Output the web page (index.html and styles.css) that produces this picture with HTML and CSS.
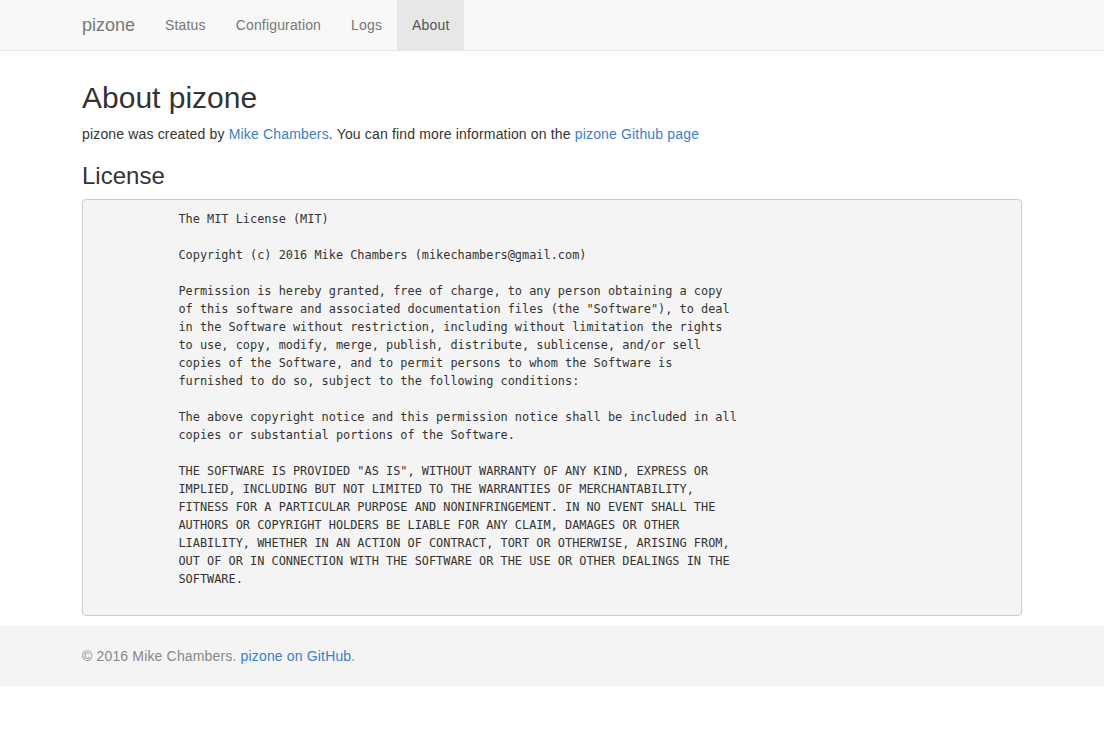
FILE: index.html
```html
<!DOCTYPE html>
<html lang="en">
<head>
<meta charset="utf-8">
<title>pizone - About</title>
<link rel="stylesheet" href="styles.css">
</head>
<body>
<nav class="navbar">
  <div class="container nav-inner">
    <a class="brand" href="#">pizone</a>
    <ul class="nav">
      <li><a href="#">Status</a></li>
      <li><a href="#">Configuration</a></li>
      <li><a href="#">Logs</a></li>
      <li class="active"><a href="#">About</a></li>
    </ul>
  </div>
</nav>
<main class="container">
  <h2 class="title">About pizone</h2>
  <p class="intro">pizone was created by <a href="#">Mike Chambers</a>. You can find more information on the <a href="#">pizone Github page</a></p>
  <h3 class="subtitle">License</h3>
<pre class="license">
            The MIT License (MIT)

            Copyright (c) 2016 Mike Chambers (mikechambers@gmail.com)

            Permission is hereby granted, free of charge, to any person obtaining a copy
            of this software and associated documentation files (the "Software"), to deal
            in the Software without restriction, including without limitation the rights
            to use, copy, modify, merge, publish, distribute, sublicense, and/or sell
            copies of the Software, and to permit persons to whom the Software is
            furnished to do so, subject to the following conditions:

            The above copyright notice and this permission notice shall be included in all
            copies or substantial portions of the Software.

            THE SOFTWARE IS PROVIDED "AS IS", WITHOUT WARRANTY OF ANY KIND, EXPRESS OR
            IMPLIED, INCLUDING BUT NOT LIMITED TO THE WARRANTIES OF MERCHANTABILITY,
            FITNESS FOR A PARTICULAR PURPOSE AND NONINFRINGEMENT. IN NO EVENT SHALL THE
            AUTHORS OR COPYRIGHT HOLDERS BE LIABLE FOR ANY CLAIM, DAMAGES OR OTHER
            LIABILITY, WHETHER IN AN ACTION OF CONTRACT, TORT OR OTHERWISE, ARISING FROM,
            OUT OF OR IN CONNECTION WITH THE SOFTWARE OR THE USE OR OTHER DEALINGS IN THE
            SOFTWARE.
        
</pre>
</main>
<footer class="footer">
  <div class="container">
    <p class="footer-text">&copy; 2016 Mike Chambers. <a href="#">pizone on GitHub</a>.</p>
  </div>
</footer>
</body>
</html>
```

FILE: styles.css
```css
* { box-sizing: border-box; }

html, body {
  margin: 0;
  padding: 0;
}

body {
  font-family: "Liberation Sans", Arial, Helvetica, sans-serif;
  font-size: 14px;
  line-height: 20px;
  letter-spacing: 0.16px;
  color: #333;
  background: #fff;
}

a {
  color: #3a7fc4;
  text-decoration: none;
}

.container {
  width: 970px;
  margin: 0 auto;
  padding: 0 15px;
}

.navbar {
  height: 51px;
  background: #f8f8f8;
  border-bottom: 1px solid #e7e7e7;
}

.nav-inner {
  display: flex;
  align-items: stretch;
  height: 50px;
}

.brand {
  display: block;
  height: 50px;
  padding: 15px 15px;
  margin-left: -15px;
  font-size: 18px;
  line-height: 20px;
  letter-spacing: 0;
  color: #777;
}

.nav {
  display: flex;
  list-style: none;
  margin: 0;
  padding: 0;
}

.nav li a {
  display: block;
  height: 50px;
  padding: 15px 15px;
  line-height: 20px;
  color: #777;
}

.nav li.active a {
  background: #e7e7e7;
  color: #555;
}

.title {
  font-size: 30px;
  font-weight: 500;
  line-height: 33px;
  letter-spacing: 0;
  margin: 30px 0 10px;
}

.intro {
  margin: 0;
}

.subtitle {
  font-size: 24px;
  font-weight: 500;
  line-height: 26.4px;
  letter-spacing: 0;
  margin: 19px 0 10px;
}

.license {
  margin: 0 0 10px;
  padding: 9.5px;
  background: #f4f4f4;
  border: 1px solid #ccc;
  border-radius: 4px;
  font-family: "DejaVu Sans Mono", "Liberation Mono", monospace;
  font-size: 11.9px;
  line-height: 18px;
  letter-spacing: 0;
  color: #333;
  white-space: pre;
  overflow: hidden;
}

.footer {
  background: #f4f4f4;
  height: 60px;
  padding: 20px 0;
}

.footer-text {
  margin: 0;
  color: #888;
}
```
